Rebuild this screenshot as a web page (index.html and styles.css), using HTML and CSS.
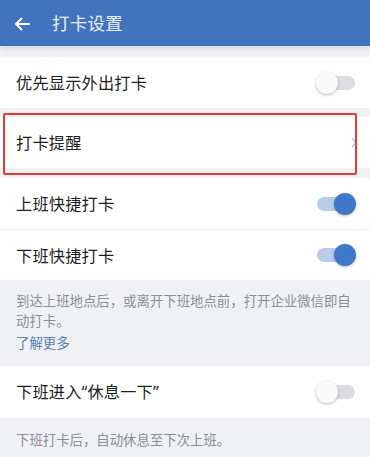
FILE: index.html
```html
<!DOCTYPE html>
<html lang="zh-CN">
<head>
<meta charset="utf-8">
<title>打卡设置</title>
<link rel="stylesheet" href="styles.css">
</head>
<body>
<div class="page">
  <header class="topbar">
    <svg class="back" width="16" height="14" viewBox="0 0 16 14">
      <path d="M15 7H2M7.5 1.5L2 7l5.5 5.5" fill="none" stroke="#ffffff" stroke-width="2" stroke-linecap="round" stroke-linejoin="round"/>
    </svg>
    <span class="title">打卡设置</span>
  </header>
  <div class="gap gap-top"></div>
  <div class="row row1">
    <span class="label">优先显示外出打卡</span>
    <span class="switch"><span class="track"></span><span class="knob"></span></span>
  </div>
  <div class="gap gap-a"></div>
  <div class="highlight-wrap">
    <div class="row row2">
      <span class="label">打卡提醒</span>
      <svg class="chev" width="6" height="11" viewBox="0 0 6 11"><path d="M0.8 0.8L5 5.5 0.8 10.2" fill="none" stroke="#b9bcc1" stroke-width="1.2"/></svg>
    </div>
    <div class="highlight"></div>
  </div>
  <div class="gap gap-b"></div>
  <div class="row row3 divided">
    <span class="label">上班快捷打卡</span>
    <span class="switch on"><span class="track"></span><span class="knob"></span></span>
  </div>
  <div class="row row4">
    <span class="label">下班快捷打卡</span>
    <span class="switch on"><span class="track"></span><span class="knob"></span></span>
  </div>
  <div class="desc desc1">
    <p class="desc-text">到达上班地点后，或离开下班地点前，打开企业微信即自动打卡。</p>
    <p class="more">了解更多</p>
  </div>
  <div class="row row5">
    <span class="label">下班进入<span class="q">“</span>休息一下<span class="q">”</span></span>
    <span class="switch"><span class="track"></span><span class="knob"></span></span>
  </div>
  <div class="desc desc2">
    <p class="desc-text">下班打卡后，自动休息至下次上班。</p>
  </div>
</div>
</body>
</html>
```
FILE: styles.css
```css
html, body {
  margin: 0;
  padding: 0;
  background: #eff1f4;
}
body {
  font-family: "Noto Sans CJK SC", "Noto Sans", sans-serif;
  width: 370px;
  height: 457px;
  overflow: hidden;
}
.page {
  display: flex;
  flex-direction: column;
}
.topbar {
  height: 46px;
  background: #4174bd;
  display: flex;
  align-items: center;
  padding-left: 14px;
  box-sizing: border-box;
  position: relative;
  z-index: 2;
  box-shadow: 0 2px 6px rgba(0, 0, 0, 0.12);
}
.back {
  display: block;
  margin-top: 1px;
}
.title {
  margin-left: 22px;
  color: #e9eef6;
  font-size: 17.5px;
  line-height: 1;
  letter-spacing: 0.2px;
}
.gap { background: #eff1f4; }
.gap-top { height: 11px; }
.gap-a { height: 9px; }
.gap-b { height: 10px; }
.row {
  background: #ffffff;
  display: flex;
  align-items: center;
  justify-content: space-between;
  padding: 0 14px 0 16px;
  box-sizing: border-box;
}
.row1 { height: 51px; }
.row2 { height: 51px; padding-right: 13px; }
.row3 { height: 52px; }
.row4 { height: 50px; }
.row5 { height: 52px; }
.divided { border-bottom: 1px solid #eceef1; }
.label {
  font-size: 16.2px;
  color: #1f1f1f;
  line-height: 1;
  letter-spacing: 0.2px;
}
.q {
  font-family: "Noto Sans", "DejaVu Sans", sans-serif;
  letter-spacing: 0;
}
.highlight-wrap {
  position: relative;
}
.highlight {
  position: absolute;
  left: 3px;
  top: -4px;
  width: 354px;
  height: 62px;
  border: 2px solid #e43a36;
  border-radius: 2px;
  box-sizing: border-box;
  pointer-events: none;
}
.chev { display: block; }
.switch {
  position: relative;
  width: 40px;
  height: 22px;
  display: block;
}
.track {
  position: absolute;
  left: 5px;
  top: 4px;
  width: 34px;
  height: 14px;
  border-radius: 7px;
  background: #dcdde0;
}
.knob {
  position: absolute;
  left: 0;
  top: 0;
  width: 22px;
  height: 22px;
  border-radius: 50%;
  background: #fafafa;
  box-shadow: 0 1px 3px rgba(0, 0, 0, 0.28);
}
.switch.on .track {
  left: 1px;
  background: #b9cbea;
}
.switch.on .knob {
  left: auto;
  right: 0;
  background: #3f78c8;
  box-shadow: 0 1px 3px rgba(0, 0, 0, 0.25);
}
.desc {
  padding: 10px 16px 0 16px;
  box-sizing: border-box;
}
.desc1 { height: 86px; }
.desc2 { height: 39px; padding-top: 11px; }
.desc-text {
  margin: 0;
  font-size: 13.4px;
  line-height: 20px;
  color: #8b9097;
}
.more {
  margin: 2px 0 0 0;
  font-size: 13.4px;
  line-height: 20px;
  color: #5a80b8;
}
```
